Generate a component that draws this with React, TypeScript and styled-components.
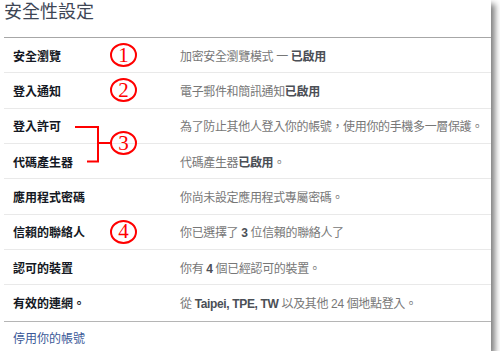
import styled, {createGlobalStyle} from "styled-components";

const GlobalStyle = createGlobalStyle`
  html, body {
    margin: 0;
    background: #fff;
  }
  body {
    font-family: "Liberation Sans", "Noto Sans CJK TC", sans-serif;
  }
`;

const Card = styled.div`
  position: relative;
  width: 491px;
  height: 351px;
  background: #fff;
  box-shadow: 4px 4px 6px rgba(0, 0, 0, 0.5);
  display: flex;
  flex-direction: column;
`;

const Title = styled.h2`
  margin: 0;
  height: 37px;
  padding-left: 4px;
  font-size: 18px;
  line-height: 24px;
  font-weight: normal;
  color: #3e4655;
`;

const List = styled.div`
  margin-left: 4px;
  border-top: 1px solid #a7a7a7;
`;

const Row = styled.div<{ $last?: boolean }>`
  display: grid;
  grid-template-columns: 97px 70px 1fr;
  align-items: center;
  box-sizing: border-box;
  height: 35.33px;
  padding-left: 9px;
  border-bottom: ${p => (p.$last ? "none" : "1px solid #e9e9e9")};
`;

const Label = styled.div`
  font-size: 12px;
  font-weight: bold;
  color: #141823;
  white-space: nowrap;
`;

const Value = styled.div`
  font-size: 12px;
  letter-spacing: -0.35px;
  color: #777;
  white-space: nowrap;
`;

const Em = styled.b`
  color: #4b4f56;
`;

const Mark = styled.span`
  display: inline-flex;
  align-items: center;
  justify-content: center;
  box-sizing: border-box;
  width: 27px;
  height: 24px;
  border: 2px solid #f00;
  border-radius: 50%;
  color: #f00;
  font-family: "Liberation Serif", serif;
  font-size: 21px;
  line-height: 1;
`;

const Callout = styled.div`
  position: absolute;
  left: 75px;
  top: 123px;
  height: 40px;
  display: flex;
  align-items: center;
`;

const Footer = styled.div`
  margin-left: 4px;
  border-top: 1px solid #b5b5b5;
  padding: 10px 0 0 9px;
  font-size: 12px;
  line-height: 14px;
  color: #3b5998;
`;

type Item = { label: string; mark?: string; value: React.ReactNode };

const items: Item[] = [
  { label: "安全瀏覽", mark: "1", value: <>加密安全瀏覽模式 一 <Em>已啟用</Em></> },
  { label: "登入通知", mark: "2", value: <>電子郵件和簡訊通知<Em>已啟用</Em></> },
  { label: "登入許可", value: "為了防止其他人登入你的帳號，使用你的手機多一層保護。" },
  { label: "代碼產生器", value: <>代碼產生器<Em>已啟用</Em>。</> },
  { label: "應用程式密碼", value: "你尚未設定應用程式專屬密碼。" },
  { label: "信賴的聯絡人", mark: "4", value: <>你已選擇了 <Em>3</Em> 位信賴的聯絡人了</> },
  { label: "認可的裝置", value: <>你有 <Em>4</Em> 個已經認可的裝置。</> },
  { label: "有效的連網。", value: <>從 <Em>Taipei, TPE, TW</Em> 以及其他 24 個地點登入。</> },
];

export default function App() {
  return <>
    <GlobalStyle />
    <Card>
      <Title>安全性設定</Title>
      <List>
        {items.map((item, idx) => (
          <Row key={item.label} $last={idx === items.length - 1}>
            <Label>{item.label}</Label>
            <div>{item.mark && <Mark>{item.mark}</Mark>}</div>
            <Value>{item.value}</Value>
          </Row>
        ))}
      </List>
      <Footer>停用你的帳號</Footer>
      <Callout>
        <svg width="35" height="40" viewBox="0 0 35 40">
          <path d="M0 4 H23 V38.5 H12 M23 20 H35" fill="none" stroke="#f00" strokeWidth="2" />
        </svg>
        <Mark>3</Mark>
      </Callout>
    </Card>
  </>;
}
